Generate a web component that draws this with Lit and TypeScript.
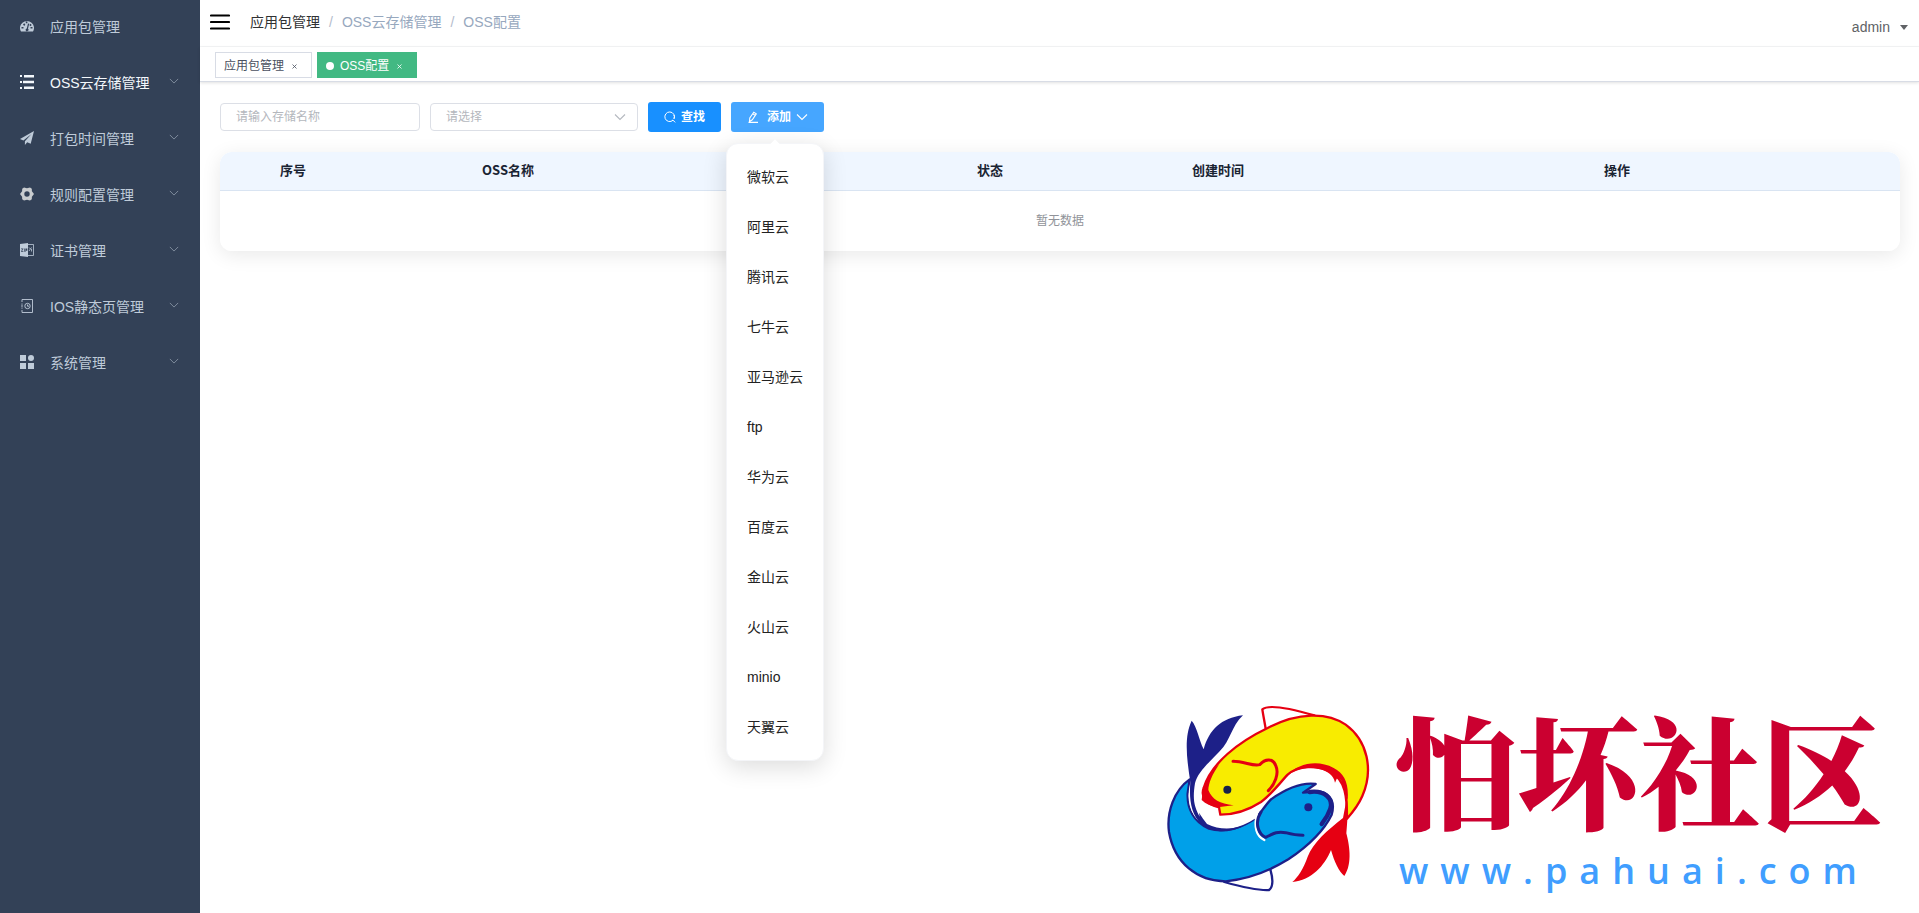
import { LitElement, html, css, svg } from "lit";
import { customElement, state } from "lit/decorators.js";
import { classMap } from "lit/directives/class-map.js";

const SANS = css`"Liberation Sans", "Noto Sans CJK SC", sans-serif`;

const chevron = html`<svg class="chevron" viewBox="0 0 12 12" aria-hidden="true">
  <path d="M1 3.500 6 8.500 11 3.500" fill="none" stroke="currentColor" stroke-width="1.1" />
</svg>`;

const icons: Record<string, unknown> = {
  dashboard: svg`<path fill="currentColor" fill-rule="evenodd" d="M1 12.500A7 6.900 0 1 1 13 12.500H1ZM5.600 10.800a1.400 1.400 0 1 0 2.400-1L9.200 4.800 8 4.500 6.800 9.400A1.400 1.400 0 0 0 5.600 10.800ZM1.500 9.600h2V7.900h-2Zm9 0h2V7.900h-2ZM3 5.600 4.200 6.900 5.400 5.600 4.200 4.300ZM5.800 4.300h1.600V2.500H5.800ZM9.300 6 10.500 7.200 11.700 6 10.500 4.700Z"/>`,
  list: svg`<path fill="currentColor" d="M0 0h2v2H0zM4 0h10v2.500H4zM0 6h2v2H0zM3 5.700h11v2.500H3zM0 12h2v2H0zM4 11.500h10V14H4z"/>`,
  plane: svg`<path fill="currentColor" d="M14 0 0 8l3.400 1.500L11.500 3 4.900 10.200V14l2.300-2.800 3.500 1.600z"/>`,
  gear: svg`<path fill="#c9cccf" fill-rule="evenodd" d="M4 .500 7 1.300 10 .500l1.800 1.200.100 2.600L14 7l-2.100 2.700-.100 2.600L10 13.500l-3-.800-3 .800-1.800-1.200-.100-2.600L0 7l2.100-2.700.100-2.600ZM7 4.300a2.700 2.700 0 1 0 0 5.400 2.700 2.700 0 0 0 0-5.400Z"/>`,
  zip: svg`<path fill="currentColor" fill-rule="evenodd" d="M0 1 8 0v14l-8-1ZM1 5.500v.700h1.500L1 8.200v.600h2.400v-.700H2l1.400-2v-.600ZM4 5.500v3.300h.700V5.500Zm1.400 0v3.300H6V7.800h1.300V5.500Z"/><path fill="none" stroke="currentColor" stroke-width=".8" d="M8 1.500h5.500v11H8M9 8l2.500-3.500M9 4.500l1.500 1.500M11.500 6v2.500"/>`,
  page: svg`<path fill="none" stroke="currentColor" stroke-width=".9" d="M2 3V.500h10.500v13H2V11M2 4.500v1.200M2 8.500v1.200M1 7h2"/><circle cx="7.500" cy="7" r="2.700" fill="none" stroke="currentColor" stroke-width=".9"/><path fill="none" stroke="currentColor" stroke-width=".9" d="M7.500 5.500V7.200H9"/>`,
  grid: svg`<path fill="currentColor" d="M0 0h6v6H0zM0 8h6v6H0zM8 8h6v6H8z"/><circle cx="11" cy="3" r="3" fill="currentColor"/>`,
};

interface MenuEntry {
  label: string;
  icon: string;
  children: boolean;
  active?: boolean;
}

@customElement("side-menu")
class SideMenu extends LitElement {
  static styles = css`
    :host {
      display: block;
      background: #334157;
      font-family: ${SANS};
    }
    .item {
      display: flex;
      align-items: center;
      height: 56px;
      padding: 0 20px 2px;
      box-sizing: border-box;
      color: #bfcbd9;
      font-size: 14px;
      line-height: 20px;
      text-decoration: none;
    }
    .active {
      color: #f4f8fc;
    }
    .icon {
      width: 14px;
      height: 14px;
      margin: 0 16px 2px 0;
    }
    .label {
      flex: 1;
      white-space: nowrap;
    }
    .chevron {
      width: 10px;
      height: 10px;
      margin: 0 1px 4px 0;
      color: #8592a3;
    }
  `;

  private entries: MenuEntry[] = [
    { label: "应用包管理", icon: "dashboard", children: false },
    { label: "OSS云存储管理", icon: "list", children: true, active: true },
    { label: "打包时间管理", icon: "plane", children: true },
    { label: "规则配置管理", icon: "gear", children: true },
    { label: "证书管理", icon: "zip", children: true },
    { label: "IOS静态页管理", icon: "page", children: true },
    { label: "系统管理", icon: "grid", children: true },
  ];

  render() {
    return html`<nav>
      ${this.entries.map(
        (e) => html`<a href="#" class=${classMap({ item: true, active: !!e.active })}>
          <svg class="icon" viewBox="0 0 14 14" aria-hidden="true">${icons[e.icon]}</svg>
          <span class="label">${e.label}</span>
          ${e.children ? chevron : null}
        </a>`
      )}
    </nav>`;
  }
}

@customElement("top-bar")
class TopBar extends LitElement {
  static styles = css`
    :host {
      display: block;
      font-family: ${SANS};
    }
    .navbar {
      display: flex;
      align-items: center;
      height: 47px;
      padding: 0 11px 2px 10px;
      box-sizing: border-box;
      border-bottom: 1px solid #f5f6f7;
    }
    button {
      padding: 0;
      border: 0;
      background: none;
      font: inherit;
      color: inherit;
      cursor: pointer;
    }
    .toggle,
    .toggle svg {
      display: block;
      width: 20px;
      height: 16px;
    }
    .crumbs {
      display: flex;
      flex: 1;
      margin-left: 20px;
      font-size: 14px;
      line-height: 20px;
      color: #97a8be;
    }
    .crumbs a {
      color: #303133;
      text-decoration: none;
    }
    .slash {
      margin: 0 9px;
      color: #b4bccc;
    }
    .user {
      display: flex;
      align-items: center;
      gap: 10px;
      padding-top: 10px;
      font-size: 14px;
      line-height: 20px;
      color: #606266;
    }
    .caret {
      border: 4px solid transparent;
      border-top: 5px solid #606266;
      border-bottom: 0;
    }
    .tags {
      display: flex;
      gap: 5px;
      height: 35px;
      padding: 5px 15px 0;
      box-sizing: border-box;
      border-bottom: 1px solid #d8dce5;
      box-shadow: 0 1px 3px rgba(0, 0, 0, 0.12);
    }
    .tag {
      display: flex;
      align-items: center;
      height: 26px;
      padding: 1px 8px 0;
      box-sizing: border-box;
      border: 1px solid #d8dce5;
      color: #495060;
      font-size: 12px;
      line-height: 16px;
      white-space: nowrap;
    }
    .current {
      border-color: #42b983;
      background: #42b983;
      color: #fff;
    }
    .dot {
      width: 8px;
      height: 8px;
      margin-right: 6px;
      border-radius: 50%;
      background: #fff;
    }
    .close {
      width: 16px;
      height: 16px;
      margin-left: 3px;
    }
    .close svg {
      display: block;
      margin: 6px 5px;
      width: 5px;
      height: 5px;
    }
  `;

  private close(name: string) {
    return html`<button class="close" aria-label="关闭${name}">
      <svg viewBox="0 0 5 5"><path d="M.5.5l4 4M4.500.5l-4 4" stroke="currentColor" stroke-width=".8" /></svg>
    </button>`;
  }

  render() {
    return html`
      <header class="navbar">
        <button class="toggle" aria-label="菜单">
          <svg viewBox="0 0 20 16">
            <path d="M1 1.500h18M1 8h18M1 14.500h18" stroke="#000" stroke-width="2.2" stroke-linecap="round" />
          </svg>
        </button>
        <nav class="crumbs">
          <a href="#">应用包管理</a><span class="slash">/</span><span>OSS云存储管理</span
          ><span class="slash">/</span><span>OSS配置</span>
        </nav>
        <button class="user">admin<span class="caret"></span></button>
      </header>
      <div class="tags">
        <div class="tag">应用包管理${this.close("应用包管理")}</div>
        <div class="tag current"><span class="dot"></span>OSS配置${this.close("OSS配置")}</div>
      </div>
    `;
  }
}

@customElement("site-mark")
class SiteMark extends LitElement {
  static styles = css`
    :host {
      display: flex;
      align-items: flex-start;
      pointer-events: none;
    }
    .fish {
      flex: none;
      width: 240px;
      height: 223px;
    }
    .words {
      display: flex;
      flex-direction: column;
      padding-left: 4px;
      white-space: nowrap;
    }
    .name {
      font-family: "Noto Serif CJK SC", "Noto Sans CJK SC", serif;
      font-size: 122px;
      font-weight: 900;
      line-height: 156px;
      color: #cb0030;
    }
    .url {
      font-family: "Open Sans", "Noto Sans", sans-serif;
      font-size: 36px;
      font-weight: 600;
      line-height: 50px;
      letter-spacing: 12px;
      margin-left: 4px;
      color: #409eff;
    }
  `;

  render() {
    return html`
      <svg class="fish" viewBox="0 0 720 669" aria-hidden="true">
        <g stroke-linejoin="round" stroke-linecap="round">
          <path fill="#fff" stroke="#e60012" stroke-width="7" d="M344 116C340 92 336 72 334 58 350 44 400 50 490 76" />
          <path fill="#fff" stroke="#1d2088" stroke-width="7" d="M220 576C270 590 320 602 354 600 368 590 366 566 358 538" />
          <path fill="#f8ec00" stroke="#e60012" stroke-width="7" d="M204 352C166 342 148 322 158 294 180 220 262 156 350 114 440 66 530 66 584 104 650 152 668 240 634 318 622 346 604 368 588 386 588 320 584 272 540 246 500 224 440 226 410 254 382 284 362 312 330 336 290 362 246 374 208 374Z" />
          <path fill="#e60012" d="M152 330C160 270 176 246 204 224 184 252 172 280 172 300 184 330 206 340 248 346L200 352C180 348 164 342 152 330ZM410 256C440 220 500 208 548 234 580 250 594 280 590 330L576 290 570 270 560 260 552 278C548 256 530 244 508 238 470 226 434 238 410 256Z" />
          <path fill="#00a0e9" stroke="#1d2088" stroke-width="7" d="M116 268C70 300 46 366 54 426 70 520 140 574 224 574 300 566 360 540 412 508 474 466 520 420 542 374 552 340 542 312 506 304L456 308 494 282C450 276 400 300 360 328 344 344 332 364 318 382 274 414 220 430 174 416 128 396 108 356 110 310Z" />
          <path fill="none" stroke="#fff" stroke-width="7" d="M120 284C108 336 126 374 154 398 206 430 270 410 312 382M318 374C308 410 316 438 340 450" />
          <path fill="#1d2088" d="M118 276C108 210 98 142 122 92 138 110 144 150 158 178 174 120 210 84 276 76 240 110 240 150 206 184 174 218 140 246 132 280 124 330 130 350 146 380L144 368 156 386 168 402C210 424 260 416 290 402 240 430 190 432 150 402 120 370 114 330 118 276Z" />
          <path fill="#e60012" d="M576 384C530 420 486 458 470 500 458 536 440 562 424 576 482 570 520 528 540 480 550 516 564 544 580 558 606 520 594 460 586 430 590 380 592 350 588 320Z" />
          <path fill="none" stroke="#e60012" stroke-width="9" d="M246 214C280 214 306 230 326 224 344 204 366 206 374 226 386 252 370 284 352 302" />
          <path fill="none" stroke="#1d2088" stroke-width="9" d="M330 366C308 400 324 434 344 442 366 432 372 424 404 428 426 434 440 436 456 436" />
          <path fill="none" stroke="#1d2088" stroke-width="13" d="M476 306C520 300 548 326 538 356 530 380 520 392 512 402" />
        </g>
        <circle cx="229" cy="299" r="12" fill="#16204a" />
        <circle cx="472" cy="352" r="12" fill="#1d2088" />
      </svg>
      <div class="words">
        <span class="name">怕坏社区</span>
        <span class="url">www.pahuai.com</span>
      </div>
    `;
  }
}

@customElement("app-root")
class AppRoot extends LitElement {
  static styles = css`
    :host {
      display: grid;
      grid-template-columns: 200px minmax(0, 1fr);
      position: relative;
      min-height: 100vh;
      background: #fff;
      font-family: ${SANS};
    }
    .content {
      padding: 20px 19px 20px 20px;
    }
    .filters {
      display: flex;
      align-items: center;
      gap: 10px;
      margin-bottom: 20px;
    }
    .field {
      height: 28px;
      padding: 0 15px;
      box-sizing: border-box;
      border: 1px solid #dcdfe6;
      border-radius: 4px;
      background: #fff;
      color: #b4b7bd;
      font-family: inherit;
      font-size: 12px;
    }
    .field::placeholder {
      color: #b4b7bd;
      opacity: 1;
    }
    .name {
      width: 200px;
    }
    .picker {
      display: grid;
      align-items: center;
      width: 208px;
    }
    .picker > * {
      grid-area: 1 / 1;
    }
    .picker select {
      appearance: none;
      width: 100%;
    }
    .picker .chevron {
      justify-self: end;
      margin-right: 12px;
      color: #b4b8bf;
      pointer-events: none;
    }
    .chevron,
    .glyph {
      width: 12px;
      height: 12px;
    }
    .btn {
      display: flex;
      align-items: center;
      gap: 5px;
      height: 30px;
      padding: 0 16px;
      border: 0;
      border-radius: 3px;
      background: #1890ff;
      color: #fff;
      font-family: inherit;
      font-size: 12px;
      font-weight: 700;
      line-height: 16px;
      cursor: pointer;
    }
    .light {
      background: #46a6ff;
    }
    .light .glyph {
      margin-right: 3px;
    }
    .dropdown {
      position: relative;
    }
    .menu {
      position: absolute;
      z-index: 2;
      top: 41px;
      right: 0;
      margin: 0;
      padding: 8px 0;
      list-style: none;
      border: 1px solid #f4f5f8;
      border-radius: 12px;
      background: #fff;
      box-shadow: 0 6px 24px rgba(0, 0, 0, 0.14);
    }
    .menu::before {
      content: "";
      position: absolute;
      top: -3px;
      left: 44px;
      width: 8px;
      height: 8px;
      background: #fff;
      transform: rotate(45deg);
    }
    .menu button {
      display: block;
      width: 100%;
      height: 50px;
      padding: 0 20px;
      border: 0;
      background: none;
      color: #222;
      font-family: inherit;
      font-size: 14px;
      line-height: 20px;
      text-align: left;
      white-space: nowrap;
      cursor: pointer;
    }
    .card {
      overflow: hidden;
      border-radius: 12px;
      box-shadow: 0 4px 20px rgba(0, 0, 0, 0.09);
    }
    table {
      width: 100%;
      table-layout: fixed;
      border-collapse: collapse;
      background: #fff;
    }
    th {
      height: 36px;
      padding: 0 0 2px;
      border-bottom: 1px solid #d9e4f2;
      background: #eff6ff;
      color: #1a2433;
      font-family: "Noto Sans CJK SC", sans-serif;
      font-size: 13px;
      font-weight: 700;
      line-height: 20px;
    }
    td {
      height: 60px;
      padding: 0;
      color: #909399;
      font-size: 12px;
      line-height: 20px;
      text-align: center;
    }
    site-mark {
      position: absolute;
      right: 36px;
      bottom: 0;
    }
  `;

  @state() private menuOpen = true;

  private columns = [
    { title: "序号", width: 146 },
    { title: "OSS名称", width: 284 },
    { title: "", width: 228 },
    { title: "状态", width: 224 },
    { title: "创建时间", width: 232 },
    { title: "操作", width: 566 },
  ];

  private vendors = [
    "微软云", "阿里云", "腾讯云", "七牛云", "亚马逊云", "ftp",
    "华为云", "百度云", "金山云", "火山云", "minio", "天翼云",
  ];

  render() {
    const total = this.columns.reduce((sum, c) => sum + c.width, 0);
    return html`
      <side-menu></side-menu>
      <div>
        <top-bar></top-bar>
        <main class="content">
          <form class="filters" @submit=${(e: Event) => e.preventDefault()}>
            <input class="field name" type="text" placeholder="请输入存储名称" aria-label="存储名称" />
            <div class="picker">
              <select class="field" aria-label="请选择">
                <option>请选择</option>
              </select>
              ${chevron}
            </div>
            <button class="btn" type="submit">
              <svg class="glyph" viewBox="0 0 12 12" aria-hidden="true">
                <path d="M9 9.200A4.800 4.800 0 1 1 10 7.800M8.600 8.800 11.200 11.400M10 7.800A4.800 4.800 0 0 0 10 4" fill="none" stroke="currentColor" />
              </svg>
              查找
            </button>
            <div class="dropdown">
              <button class="btn light" type="button" aria-expanded=${this.menuOpen}
                @click=${() => (this.menuOpen = !this.menuOpen)}>
                <svg class="glyph" viewBox="0 0 12 12" aria-hidden="true">
                  <path d="M2.500 10.500 2.800 7 6.800 1.200 9.300 2.800 5.300 8.800ZM5.800 2.800 8.200 4.400M1.500 11.400H11" fill="none" stroke="currentColor" stroke-width="1.100" />
                </svg>
                添加 ${chevron}
              </button>
              ${this.menuOpen
                ? html`<ul class="menu">
                    ${this.vendors.map((v) => html`<li><button type="button">${v}</button></li>`)}
                  </ul>`
                : null}
            </div>
          </form>
          <div class="card">
            <table>
              <colgroup>
                ${this.columns.map((c) => html`<col style="width:${(c.width / total) * 100}%" />`)}
              </colgroup>
              <thead>
                <tr>${this.columns.map((c) => html`<th scope="col">${c.title}</th>`)}</tr>
              </thead>
              <tbody>
                <tr><td colspan=${this.columns.length}>暂无数据</td></tr>
              </tbody>
            </table>
          </div>
        </main>
      </div>
      <site-mark></site-mark>
    `;
  }
}
